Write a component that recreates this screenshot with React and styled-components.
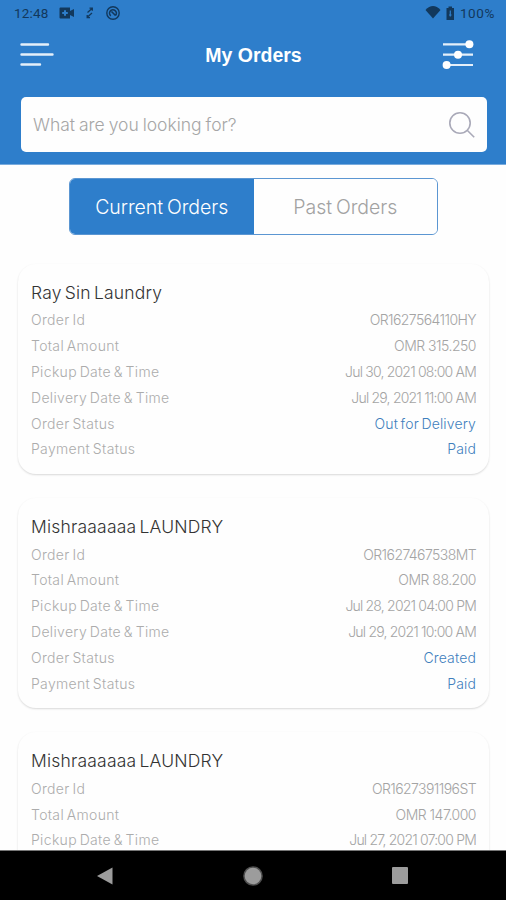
import styled, { createGlobalStyle } from "styled-components";

const orders = [
  {
    shop: "Ray Sin Laundry",
    id: "OR1627564110HY",
    amount: "OMR 315.250",
    pickup: "Jul 30, 2021 08:00 AM",
    delivery: "Jul 29, 2021 11:00 AM",
    status: "Out for Delivery",
    payment: "Paid",
  },
  {
    shop: "Mishraaaaaa LAUNDRY",
    id: "OR1627467538MT",
    amount: "OMR 88.200",
    pickup: "Jul 28, 2021 04:00 PM",
    delivery: "Jul 29, 2021 10:00 AM",
    status: "Created",
    payment: "Paid",
  },
  {
    shop: "Mishraaaaaa LAUNDRY",
    id: "OR1627391196ST",
    amount: "OMR 147.000",
    pickup: "Jul 27, 2021 07:00 PM",
  },
];

const fields = [
  { key: "id", label: "Order Id", spacing: "-0.58px" },
  { key: "amount", label: "Total Amount", spacing: "-0.5px" },
  { key: "pickup", label: "Pickup Date & Time", spacing: "-0.8px" },
  { key: "delivery", label: "Delivery Date & Time", spacing: "-0.8px" },
  { key: "status", label: "Order Status", accent: true },
  { key: "payment", label: "Payment Status", accent: true },
];

function OrderCard({ order }) {
  return (
    <Card>
      <ShopName>{order.shop}</ShopName>
      {fields
        .filter((field) => order[field.key])
        .map((field) => (
          <Row key={field.key}>
            <Label>{field.label}</Label>
            <Value $accent={field.accent} $spacing={field.spacing}>
              {order[field.key]}
            </Value>
          </Row>
        ))}
    </Card>
  );
}

function App() {
  return (
    <Screen>
      <GlobalStyle />
      <Header>
        <StatusBar>
          <Clock>12:48</Clock>
          <StatusIcons width="62" height="16" viewBox="0 0 62 16">
            <path d="M1.500 2.500h9.500v3.500l4-2v8l-4-2v3.500H1.500a1 1 0 0 1-1-1v-9a1 1 0 0 1 1-1z" />
            <path d="M6 5.200v5.600M3.200 8h5.600" stroke="#2e7ecb" strokeWidth="2" />
            <path d="M28.500 7.500l4.500-4M30.500 3.200h2.800v2.600M33 8l-4.500 4M31 12.600h-2.800v-2.600" fill="none" stroke="#12385c" strokeWidth="1.3" />
            <circle cx="54" cy="8" r="6.2" fill="none" stroke="#12385c" strokeWidth="1.4" />
            <path d="M51.800 10.800a3.400 3.400 0 1 1 4.800-0.500M52.500 6.500l4 4" fill="none" stroke="#12385c" strokeWidth="1.6" />
          </StatusIcons>
          <Battery>
            <StatusIcons width="35" height="16" viewBox="0 0 35 16">
              <path d="M0.500 5C5-0.300 11-0.300 15.500 5L8 13.500z" />
              <path d="M21.500 3h2V1.500h3.500V3h2v12h-7.500z" />
              <path d="M25.300 5.500v6M24 10h2.600" stroke="#2e7ecb" strokeWidth="1.2" />
            </StatusIcons>
            <Percent>100%</Percent>
          </Battery>
        </StatusBar>
        <TitleBar>
          <svg width="34" height="26" viewBox="0 0 34 26" fill="none" stroke="#e4effa" strokeWidth="2.4" strokeLinecap="round">
            <path d="M1.500 2.500h26.500M1.500 12.500h31M1.500 22.500h18.500" />
          </svg>
          <Title>My Orders</Title>
          <svg width="32" height="30" viewBox="0 0 32 30" fill="#fff" stroke="#e4effa" strokeWidth="2.2">
            <path d="M1 4.300h30M1 14.700h30M1 25h30" />
            <g stroke="none">
              <circle cx="27.4" cy="4.3" r="4" />
              <circle cx="16" cy="14.7" r="4" />
              <circle cx="4.6" cy="25" r="4" />
            </g>
          </svg>
        </TitleBar>
        <Search>
          <SearchInput placeholder="What are you looking for?" />
          <svg width="26" height="26" viewBox="0 0 26 26" fill="none" stroke="#a9a9b8" strokeWidth="1.6">
            <circle cx="11" cy="11" r="10.2" />
            <path d="M18.200 18.200l7 7" />
          </svg>
        </Search>
      </Header>
      <Tabs>
        <Tab $active>Current Orders</Tab>
        <Tab>Past Orders</Tab>
      </Tabs>
      <OrderList>
        {orders.map((order) => (
          <OrderCard key={order.id} order={order} />
        ))}
      </OrderList>
      <NavBar>
        <svg width="16" height="18" viewBox="0 0 16 18" fill="#9c9c9c">
          <path d="M0 9L15.500 0.500v17z" />
        </svg>
        <svg width="22" height="22" viewBox="0 0 22 22" fill="#9c9c9c">
          <circle cx="11" cy="11" r="9.8" fill="#4f4f4f" />
          <circle cx="11" cy="11" r="8.3" />
        </svg>
        <svg width="16" height="17" viewBox="0 0 16 17" fill="#9c9c9c">
          <rect width="16" height="17" rx="1" />
        </svg>
      </NavBar>
    </Screen>
  );
}

export default App;

const GlobalStyle = createGlobalStyle`
  * {
    box-sizing: border-box;
  }

  body {
    margin: 0;
    background: #fefefe;
    font-family: Inter, "Liberation Sans", sans-serif;
    font-weight: 300;
  }
`;

const Screen = styled.div`
  display: flex;
  flex-direction: column;
  height: 900px;
  overflow: hidden;
  background-color: #fefefe;
`;

const Header = styled.header`
  flex: none;
  height: 165px;
  background-color: #2e7ecb;
  border-bottom: 1px solid #79abdd;
`;

const StatusBar = styled.div`
  display: flex;
  align-items: center;
  height: 26px;
  padding: 0 11px 0 14px;
  color: #12385c;
  font-family: Roboto, sans-serif;
  font-size: 13.5px;
  font-weight: 400;
`;

const Clock = styled.span`
  width: 45px;
  letter-spacing: 0.2px;
`;

const StatusIcons = styled.svg`
  fill: #12385c;
`;

const Battery = styled.div`
  display: flex;
  align-items: center;
  margin-left: auto;
`;

const Percent = styled.span`
  letter-spacing: 0.6px;
`;

const TitleBar = styled.div`
  display: flex;
  align-items: center;
  height: 57px;
  padding: 0 32px 0 20px;
`;

const Title = styled.h1`
  flex: 1;
  margin: 1px 0 0;
  padding-left: 11px;
  color: white;
  font-family: "Liberation Sans", Arial, sans-serif;
  font-size: 19.5px;
  font-weight: 700;
  text-align: center;
`;

const Search = styled.div`
  display: flex;
  align-items: center;
  height: 55px;
  margin: 14px 19px 0 21px;
  padding: 0 12px;
  border-radius: 5px;
  background-color: #fefefe;
`;

const SearchInput = styled.input`
  flex: 1;
  min-width: 0;
  padding: 0;
  border: none;
  outline-width: 0;
  background: none;
  font: inherit;
  font-size: 17.5px;
  word-spacing: -1px;

  &::placeholder {
    color: #a6a6a6;
  }
`;

const Tabs = styled.div`
  display: flex;
  flex: none;
  width: 369px;
  height: 57px;
  margin: 13px 0 0 69px;
  overflow: hidden;
  border: 1px solid #5b96d2;
  border-radius: 6px;
`;

const Tab = styled.button`
  flex: 1;
  padding: 0;
  border: none;
  background-color: ${(props) => (props.$active ? "#2e7ecb" : "#fefefe")};
  color: ${(props) => (props.$active ? "white" : "#a2a2a2")};
  font: inherit;
  font-size: 19.5px;
  letter-spacing: -0.05px;
  word-spacing: -1.5px;
`;

const OrderList = styled.main`
  display: flex;
  flex: 1;
  flex-direction: column;
  gap: 24.4px;
  min-height: 0;
  padding: 29px 17px 0 18px;
  overflow: hidden;
`;

const Card = styled.section`
  flex: none;
  height: 209.8px;
  padding: 15px 13px 0;
  border-radius: 18px;
  background-color: #fefefe;
  box-shadow: 0 1px 2px rgba(0, 0, 0, 0.15);
`;

const ShopName = styled.h2`
  height: 28px;
  margin: 0;
  color: #333;
  font-size: 17.5px;
  font-weight: 300;
  line-height: 28px;
  letter-spacing: 0.2px;
  word-spacing: -2px;
`;

const Row = styled.div`
  display: flex;
  align-items: center;
  justify-content: space-between;
  height: 25.8px;
  font-size: 14px;
  white-space: nowrap;
`;

const Label = styled.span`
  color: #acacac;
  letter-spacing: 0.33px;
  word-spacing: -1.5px;
`;

const Value = styled.span`
  color: ${(props) => (props.$accent ? "#3f7fbd" : "#a4a4a4")};
  letter-spacing: ${(props) => props.$spacing || "0.15px"};
  word-spacing: ${(props) => (props.$accent ? "-1.5px" : "0")};
`;

const NavBar = styled.nav`
  display: flex;
  flex: none;
  align-items: center;
  justify-content: space-between;
  height: 50px;
  padding: 0 98px 0 97px;
  border-top: 1px solid #777;
  background-color: black;
`;
